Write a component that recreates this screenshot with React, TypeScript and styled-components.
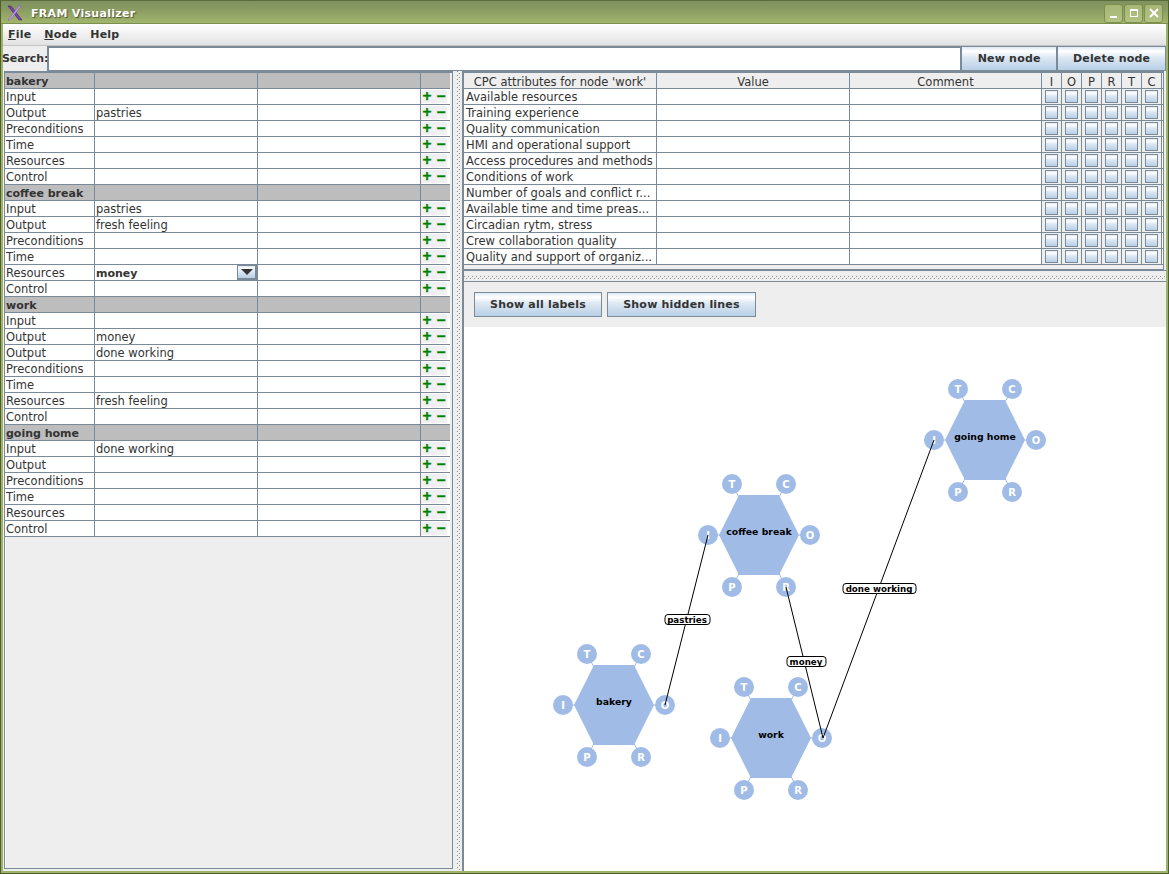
import styled, { createGlobalStyle } from "styled-components";

const GlobalStyle = createGlobalStyle`
  html, body { margin: 0; padding: 0; background: #ffffff; }
  * { box-sizing: border-box; }
`;

const LINE = "#7a8a99";
const TEXT = "#333333";
const OCEAN = "linear-gradient(to bottom, #dde8f3 0%, #ffffff 18%, #dde8f3 45%, #b8cfe5 100%)";
const FONT = `"DejaVu Sans", "Liberation Sans", sans-serif`;

type LeftRow = { label: string; output?: string; combo?: boolean };
type Group = { name: string; rows: LeftRow[] };

const groups: Group[] = [
  {
    name: "bakery",
    rows: [
      { label: "Input" },
      { label: "Output", output: "pastries" },
      { label: "Preconditions" },
      { label: "Time" },
      { label: "Resources" },
      { label: "Control" },
    ],
  },
  {
    name: "coffee break",
    rows: [
      { label: "Input", output: "pastries" },
      { label: "Output", output: "fresh feeling" },
      { label: "Preconditions" },
      { label: "Time" },
      { label: "Resources", output: "money", combo: true },
      { label: "Control" },
    ],
  },
  {
    name: "work",
    rows: [
      { label: "Input" },
      { label: "Output", output: "money" },
      { label: "Output", output: "done working" },
      { label: "Preconditions" },
      { label: "Time" },
      { label: "Resources", output: "fresh feeling" },
      { label: "Control" },
    ],
  },
  {
    name: "going home",
    rows: [
      { label: "Input", output: "done working" },
      { label: "Output" },
      { label: "Preconditions" },
      { label: "Time" },
      { label: "Resources" },
      { label: "Control" },
    ],
  },
];

const cpcRows = [
  "Available resources",
  "Training experience",
  "Quality communication",
  "HMI and operational support",
  "Access procedures and methods",
  "Conditions of work",
  "Number of goals and conflict r...",
  "Available time and time preas...",
  "Circadian rytm, stress",
  "Crew collaboration quality",
  "Quality and support of organiz...",
];

const flags = ["I", "O", "P", "R", "T", "C"];

type GraphNode = { name: string; x: number; y: number };

const nodes: GraphNode[] = [
  { name: "going home", x: 985, y: 440 },
  { name: "coffee break", x: 759, y: 535 },
  { name: "bakery", x: 614, y: 705 },
  { name: "work", x: 771, y: 738 },
];

const ports = [
  { l: "T", dx: -27, dy: -51 },
  { l: "C", dx: 27, dy: -51 },
  { l: "I", dx: -51, dy: 0 },
  { l: "O", dx: 51, dy: 0 },
  { l: "P", dx: -27, dy: 52 },
  { l: "R", dx: 27, dy: 52 },
];

const edges = [
  { label: "pastries", x1: 665, y1: 705, x2: 708, y2: 535, lx: 687, ly: 620, w: 45 },
  { label: "money", x1: 786, y1: 587, x2: 823, y2: 738, lx: 806, ly: 662, w: 39 },
  { label: "done working", x1: 823, y1: 738, x2: 934, y2: 440, lx: 879, ly: 589, w: 73 },
];

export default function App() {
  return (
    <Window>
      <GlobalStyle />
      <TitleBar>
        <TitleLeft>
          <svg width="16" height="16" viewBox="0 0 16 16">
            <path d="M1 1 L4 1 L15 15 L12 15 Z" fill="#7f3fbf" stroke="#2e1a4a" strokeWidth="0.5" />
            <path d="M14 1 L12 1 L1 15 L3 15 Z" fill="#c9a6ee" stroke="#7a52a8" strokeWidth="0.5" />
          </svg>
          <TitleText>FRAM Visualizer</TitleText>
        </TitleLeft>
        <TitleButtons>
          <TitleButton>
            <svg width="14" height="14" viewBox="0 0 14 14">
              <rect x="3" y="10" width="7" height="2" fill="#fff" />
            </svg>
          </TitleButton>
          <TitleButton>
            <svg width="14" height="14" viewBox="0 0 14 14">
              <rect x="3.5" y="3.5" width="7" height="7" fill="none" stroke="#fff" />
              <rect x="3" y="3" width="8" height="2" fill="#fff" />
            </svg>
          </TitleButton>
          <TitleButton>
            <svg width="14" height="14" viewBox="0 0 14 14">
              <path d="M3 3 L11 11 M11 3 L3 11" stroke="#fff" strokeWidth="2" />
            </svg>
          </TitleButton>
        </TitleButtons>
      </TitleBar>

      <MenuBar>
        <MenuItem><u>F</u>ile</MenuItem>
        <MenuItem><u>N</u>ode</MenuItem>
        <MenuItem>Help</MenuItem>
      </MenuBar>

      <SearchRow>
        <SearchLabel>Search:</SearchLabel>
        <SearchInput />
        <ToolButton $width={96}>New node</ToolButton>
        <ToolButton $width={109}>Delete node</ToolButton>
      </SearchRow>

      <Split>
        <LeftPane>
          {groups.map((g) => (
            <div key={g.name}>
              <GroupRow>
                <GroupName>{g.name}</GroupName>
                <GroupCell />
                <GroupCell />
                <GroupCell $last />
              </GroupRow>
              {g.rows.map((r, i) => (
                <NodeRow key={i}>
                  <Cell>{r.label}</Cell>
                  <Cell $bold={r.combo}>
                    {r.output}
                    {r.combo && (
                      <ComboArrow>
                        <svg width="12" height="6" viewBox="0 0 12 6">
                          <path d="M0 0 H12 L6 6 Z" fill="#333" />
                        </svg>
                      </ComboArrow>
                    )}
                  </Cell>
                  <Cell />
                  <ActionCell>
                    <ActionGlyph>+</ActionGlyph>
                    <ActionGlyph>−</ActionGlyph>
                  </ActionCell>
                </NodeRow>
              ))}
            </div>
          ))}
        </LeftPane>

        <VDivider />

        <RightPane>
          <CpcPane>
            <CpcHeader>
              <HeadCell>CPC attributes for node 'work'</HeadCell>
              <HeadCell>Value</HeadCell>
              <HeadCell>Comment</HeadCell>
              {flags.map((f) => (
                <HeadCell key={f}>{f}</HeadCell>
              ))}
            </CpcHeader>
            {cpcRows.map((c) => (
              <CpcRow key={c}>
                <CpcLabel>{c}</CpcLabel>
                <Cell />
                <Cell />
                {flags.map((f) => (
                  <CheckCell key={f}>
                    <Check />
                  </CheckCell>
                ))}
              </CpcRow>
            ))}
          </CpcPane>

          <HDivider />

          <LabelBar>
            <LabelButton $width={128}>Show all labels</LabelButton>
            <LabelButton $width={149}>Show hidden lines</LabelButton>
          </LabelBar>

          <Canvas>
            <svg width="702" height="544" viewBox="464 327 702 544">
              {nodes.map((n) => (
                <g key={n.name}>
                  {ports.map((p) => (
                    <line
                      key={p.l}
                      x1={n.x}
                      y1={n.y}
                      x2={n.x + p.dx}
                      y2={n.y + p.dy}
                      stroke="#a0bce6"
                      strokeWidth="1"
                    />
                  ))}
                  <polygon
                    points={`${n.x - 40},${n.y} ${n.x - 20},${n.y - 40} ${n.x + 20},${n.y - 40} ${n.x + 40},${n.y} ${n.x + 20},${n.y + 40} ${n.x - 20},${n.y + 40}`}
                    fill="#a0bce6"
                  />
                  {ports.map((p) => (
                    <g key={p.l}>
                      <circle cx={n.x + p.dx} cy={n.y + p.dy} r="10" fill="#a0bce6" />
                      <PortText x={n.x + p.dx} y={n.y + p.dy + 4}>{p.l}</PortText>
                    </g>
                  ))}
                  <NodeText x={n.x} y={n.y}>{n.name}</NodeText>
                </g>
              ))}
              {edges.map((e) => (
                <g key={e.label}>
                  <line x1={e.x1} y1={e.y1} x2={e.x2} y2={e.y2} stroke="#000" strokeWidth="1" />
                  <rect
                    x={e.lx - e.w / 2 + 0.5}
                    y={e.ly - 5.5}
                    width={e.w}
                    height="10"
                    rx="3"
                    fill="#fff"
                    stroke="#000"
                  />
                  <EdgeText x={e.lx} y={e.ly + 3}>{e.label}</EdgeText>
                </g>
              ))}
            </svg>
          </Canvas>
        </RightPane>
      </Split>
    </Window>
  );
}

const Window = styled.div`
  width: 1169px;
  height: 874px;
  display: flex;
  flex-direction: column;
  overflow: hidden;
  padding-bottom: 2px;
  background: #eeeeee;
  border: 1px solid #4f5f2c;
  border-top-color: #5c6b3a;
  font-family: ${FONT};
  font-size: 11.5px;
  color: ${TEXT};
  box-shadow: inset 2px 0 0 #9fb26c, inset -2px 0 0 #9fb26c, inset 0 -2px 0 #9fb26c;
`;

const TitleBar = styled.div`
  flex: 0 0 23px;
  display: flex;
  align-items: center;
  justify-content: space-between;
  padding: 2px 5px 0 6px;
  background: linear-gradient(to bottom, #7f9160 0%, #8a9c62 40%, #a2b56c 100%);
  border-bottom: 1px solid #7d8f4c;
`;

const TitleLeft = styled.div`
  display: flex;
  align-items: center;
  gap: 8px;
`;

const TitleText = styled.span`
  margin-top: 1px;
  font-weight: 700;
  font-size: 11px;
  letter-spacing: 0.3px;
  color: #ffffff;
  text-shadow: 1px 1px 1px #4a5530;
`;

const TitleButtons = styled.div`
  display: flex;
  gap: 1px;
`;

const TitleButton = styled.div`
  width: 19px;
  height: 19px;
  display: flex;
  align-items: center;
  justify-content: center;
  border: 1px solid #7d8f4c;
  border-radius: 3px;
  background: linear-gradient(to bottom, #a5b676, #b2c283);
`;

const MenuBar = styled.div`
  flex: 0 0 22px;
  display: flex;
  align-items: center;
  gap: 13px;
  margin: 0 2px;
  padding: 0 0 0 5px;
  background: linear-gradient(to bottom, #ffffff, #e2e2e2);
  border-bottom: 1px solid #c4c4c4;
`;

const MenuItem = styled.span`
  font-weight: 700;
  font-size: 11px;
  letter-spacing: 0.2px;
`;

const SearchRow = styled.div`
  flex: 0 0 25px;
  display: flex;
  align-items: stretch;
  margin: 0 2px 0 1px;
`;

const SearchLabel = styled.div`
  width: 45px;
  display: flex;
  align-items: center;
  font-weight: 700;
  font-size: 11px;
  letter-spacing: -0.1px;
  white-space: nowrap;
`;

const SearchInput = styled.div`
  width: 915px;
  background: #ffffff;
  border: 2px solid ${LINE};
  border-right: 1px solid ${LINE};
  border-bottom-width: 1px;
  box-shadow: 1px 1px 0 #ffffff;
`;

const ToolButton = styled.div<{ $width: number }>`
  width: ${(p) => p.$width}px;
  display: flex;
  align-items: center;
  justify-content: center;
  background: ${OCEAN};
  border: 1px solid ${LINE};
  font-weight: 700;
  font-size: 11px;
  letter-spacing: 0.2px;
`;

const Split = styled.div`
  flex: 1;
  min-height: 0;
  display: flex;
  margin: 0 2px;
  padding-left: 1px;
`;

const LeftPane = styled.div`
  width: 449px;
  height: 798px;
  padding: 0 2px 0 0;
  background: #eeeeee;
  border: 1px solid ${LINE};
  border-top-width: 2px;
  box-shadow: inset 1px 0 0 #ffffff;
`;

const VDivider = styled.div`
  width: 11px;
  background-color: #eeeeee;
  border-right: 2px solid ${LINE};
  background-image:
    repeating-linear-gradient(to bottom, #8a8a8a 0 1px, transparent 1px 4px),
    repeating-linear-gradient(to bottom, transparent 0 2px, #8a8a8a 2px 3px, transparent 3px 4px);
  background-size: 1px 100%, 1px 100%;
  background-position: 4px 0, 6px 0;
  background-repeat: no-repeat;
`;

const RightPane = styled.div`
  flex: 1;
  min-width: 0;
  display: flex;
  flex-direction: column;
`;

const rowColumns = "90px 163px 163px 30px";

const GroupRow = styled.div`
  display: grid;
  grid-template-columns: ${rowColumns};
  height: 16px;
  background: #bdbdbd;
  border-bottom: 1px solid ${LINE};
`;

const GroupCell = styled.div<{ $last?: boolean }>`
  border-right: ${(p) => (p.$last ? "none" : `1px solid ${LINE}`)};
`;

const GroupName = styled(GroupCell)`
  padding-left: 1px;
  font-weight: 700;
  font-size: 11px;
  line-height: 17px;
`;

const NodeRow = styled.div`
  display: grid;
  grid-template-columns: ${rowColumns};
  height: 16px;
  background: #ffffff;
  border-bottom: 1px solid ${LINE};
`;

const Cell = styled.div<{ $bold?: boolean }>`
  position: relative;
  padding-left: 1px;
  line-height: ${(p) => (p.$bold ? "17px" : "16px")};
  white-space: nowrap;
  overflow: hidden;
  font-size: ${(p) => (p.$bold ? "11px" : "11.5px")};
  font-weight: ${(p) => (p.$bold ? 700 : 400)};
  border-right: 1px solid ${LINE};
`;

const CpcLabel = styled(Cell)`
  padding-left: 2px;
`;

const ComboArrow = styled.div`
  position: absolute;
  right: 0;
  top: 0;
  width: 20px;
  height: 15px;
  display: flex;
  align-items: center;
  justify-content: center;
  background: ${OCEAN};
  border: 1px solid ${LINE};
  border-width: 1px 2px 2px 1px;
`;

const ActionCell = styled.div`
  display: flex;
  align-items: center;
  gap: 4px;
  width: 26px;
  height: 13px;
  margin: 1px 0 1px 0;
  padding-left: 1px;
  background: #f0f0f0;
  color: #008000;
  font-weight: 700;
`;

const ActionGlyph = styled.span`
  width: 10px;
  text-align: center;
  font-size: 12px;
  line-height: 13px;
  -webkit-text-stroke: 0.5px #008000;
`;

const cpcColumns = "193px 193px 192px repeat(6, 20px)";

const CpcPane = styled.div`
  height: 199px;
  background: #eeeeee;
  border: 1px solid ${LINE};
  border-top-width: 2px;
  border-left: none;
  margin-right: 2px;
`;

const CpcHeader = styled.div`
  display: grid;
  grid-template-columns: ${cpcColumns};
  height: 16px;
  background: #eeeeee;
  border-bottom: 1px solid ${LINE};
`;

const HeadCell = styled.div`
  text-align: center;
  line-height: 18px;
  white-space: nowrap;
  border-right: 1px solid ${LINE};
`;

const CpcRow = styled.div`
  display: grid;
  grid-template-columns: ${cpcColumns};
  height: 16px;
  background: #ffffff;
  border-bottom: 1px solid ${LINE};
`;

const CheckCell = styled.div`
  display: flex;
  align-items: center;
  justify-content: center;
  background: #eeeeee;
  border-right: 1px solid ${LINE};
`;

const Check = styled.div`
  width: 13px;
  height: 13px;
  border: 1px solid ${LINE};
  background: ${OCEAN};
`;

const HDivider = styled.div`
  flex: 0 0 12px;
  background-color: #eeeeee;
  border-top: 1px solid ${LINE};
  border-bottom: 1px solid ${LINE};
  background-image:
    repeating-linear-gradient(to right, #8a8a8a 0 1px, transparent 1px 4px),
    repeating-linear-gradient(to right, transparent 0 2px, #8a8a8a 2px 3px, transparent 3px 4px);
  background-size: 100% 1px, 100% 1px;
  background-position: 0 5px, 0 7px;
  background-repeat: no-repeat;
`;

const LabelBar = styled.div`
  flex: 0 0 45px;
  display: flex;
  gap: 5px;
  padding: 10px 0 10px 10px;
  background: #eeeeee;
`;

const LabelButton = styled.div<{ $width: number }>`
  width: ${(p) => p.$width}px;
  display: flex;
  align-items: center;
  justify-content: center;
  background: ${OCEAN};
  border: 1px solid ${LINE};
  font-weight: 700;
  font-size: 11px;
  letter-spacing: 0.2px;
`;

const Canvas = styled.div`
  flex: 1;
  min-height: 0;
  background: #ffffff;
  overflow: hidden;

  svg {
    display: block;
  }
`;

const NodeText = styled.text`
  font-family: ${FONT};
  font-size: 9.3px;
  font-weight: 700;
  fill: #000000;
  text-anchor: middle;
`;

const PortText = styled.text`
  font-family: ${FONT};
  font-size: 10px;
  font-weight: 700;
  fill: #ffffff;
  text-anchor: middle;
`;

const EdgeText = styled.text`
  font-family: ${FONT};
  font-size: 8.7px;
  font-weight: 700;
  fill: #000000;
  text-anchor: middle;
`;
